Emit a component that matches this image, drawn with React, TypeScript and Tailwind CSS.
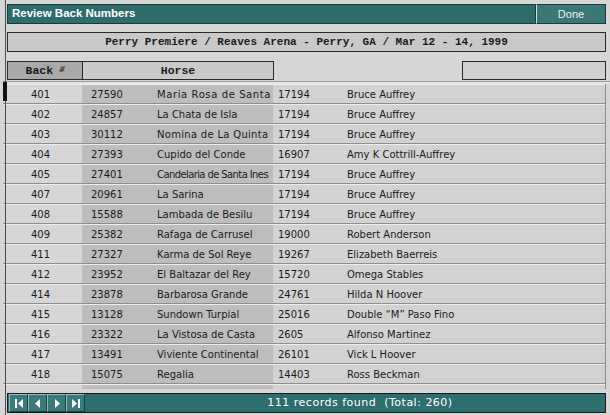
const rows = [
  ["401", "27590", "Maria Rosa de Santa", "17194", "Bruce Auffrey"],
  ["402", "24857", "La Chata de Isla", "17194", "Bruce Auffrey"],
  ["403", "30112", "Nomina de La Quinta", "17194", "Bruce Auffrey"],
  ["404", "27393", "Cupido del Conde", "16907", "Amy K Cottrill-Auffrey"],
  ["405", "27401", "Candelaria de Santa Ines", "17194", "Bruce Auffrey"],
  ["407", "20961", "La Sarina", "17194", "Bruce Auffrey"],
  ["408", "15588", "Lambada de Besilu", "17194", "Bruce Auffrey"],
  ["409", "25382", "Rafaga de Carrusel", "19000", "Robert Anderson"],
  ["411", "27327", "Karma de Sol Reye", "19267", "Elizabeth Baerreis"],
  ["412", "23952", "El Baltazar del Rey", "15720", "Omega Stables"],
  ["414", "23878", "Barbarosa Grande", "24761", "Hilda N Hoover"],
  ["415", "13128", "Sundown Turpial", "25016", "Double \u201cM\u201d Paso Fino"],
  ["416", "23322", "La Vistosa de Casta", "2605", "Alfonso Martinez"],
  ["417", "13491", "Viviente Continental", "26101", "Vick L Hoover"],
  ["418", "15075", "Regalia", "14403", "Ross Beckman"],
];

const rowFont = "font-['DejaVu_Sans',sans-serif] text-[10px] text-[#1a1a1a]";

// some names are spaced out / squeezed in the original list
const nameStyle = (name: string) => {
  if (name === "Maria Rosa de Santa") return "tracking-[0.6px]";
  if (name === "Candelaria de Santa Ines") return "tracking-[-0.6px]";
  if (name === "Nomina de La Quinta") return "tracking-[0.3px]";
  return "";
};

const NavButton = ({ kind }: { kind: "first" | "prev" | "next" | "last" }) => (
  <div className="w-[19px] h-[18px] flex items-center justify-center border border-[#9bbaba] border-r-[#1d3f3f] border-b-[#1d3f3f] bg-[#3a7a7a]">
    <svg width="10" height="11" viewBox="0 0 10 11" fill="#ffffff">
      {kind === "first" && (
        <>
          <rect x="1" y="1" width="2" height="9" />
          <path d="M9 1 L4 5.5 L9 10 Z" />
        </>
      )}
      {kind === "prev" && <path d="M7 1 L2 5.5 L7 10 Z" />}
      {kind === "next" && <path d="M3 1 L8 5.5 L3 10 Z" />}
      {kind === "last" && (
        <>
          <path d="M1 1 L6 5.5 L1 10 Z" />
          <rect x="7" y="1" width="2" height="9" />
        </>
      )}
    </svg>
  </div>
);

export default function App() {
  return (
    <div className="w-[610px] h-[415px] bg-[#d6d6d6] overflow-hidden relative border-l-[3px] border-[#d6d6d6]">
      <div className="absolute left-[2px] top-0 w-px h-[415px] bg-[#4a4a4a]" />
      <div className="absolute left-0 top-[82px] w-[4px] h-[19px] bg-[#111]" />

      {/* Title bar */}
      <div className="flex pt-[4px] pl-[4px] pr-[4px]">
        <div className="w-[529px] h-[20px] bg-[#2e6b6b] border border-[#1c3c3c] flex items-center pl-[4px]">
          <span className="font-['Liberation_Sans',sans-serif] font-bold text-[11.5px] text-white">
            Review Back Numbers
          </span>
        </div>
        <div className="w-[70px] h-[20px] bg-[#3b7777] border border-[#1c3c3c] border-l-[#cfdede] flex items-center justify-center">
          <span className="font-['Liberation_Sans',sans-serif] text-[11px] text-[#f0f0f0]">Done</span>
        </div>
      </div>

      {/* Event title */}
      <div className="mt-[8px] ml-[4px] w-[599px] h-[20px] bg-[#c9c9c9] border border-[#2a2a2a] flex items-center justify-center">
        <span className="font-['Liberation_Mono',monospace] font-bold text-[11px] text-[#1a1a1a]">
          Perry Premiere / Reaves Arena - Perry, GA / Mar 12 - 14, 1999
        </span>
      </div>

      {/* Column headers */}
      <div className="mt-[9px] ml-[4px] flex h-[19px]">
        <div className="w-[76px] bg-[#a9a9a9] border border-[#2a2a2a] flex items-center justify-center gap-[6px]">
          <span className="font-['Liberation_Mono',monospace] font-bold text-[11.5px] text-[#1a1a1a]">Back</span>
          <span className="font-['Liberation_Mono',monospace] font-bold text-[9px] text-[#1a1a1a] -skew-x-12">#</span>
        </div>
        <div className="w-[191px] bg-[#cacaca] border border-l-0 border-[#2a2a2a] flex items-center justify-center">
          <span className="font-['Liberation_Mono',monospace] font-bold text-[11.5px] text-[#1a1a1a]">Horse</span>
        </div>
        <div className="w-[188px]" />
        <div className="w-[144px] bg-[#d0d0d0] border border-[#2a2a2a]" />
      </div>

      <div className="mt-[1px] h-[3px] border-t border-[#9a9a9a] bg-[#e4e4e4]" />

      {/* Rows */}
      <div className="flex flex-col w-[603px] border-r border-[#8a8a8a]">
        {rows.map((r) => (
          <div
            key={r[0]}
            className={`flex h-[20px] items-center border-t border-[#ededed] border-b border-b-[#8e8e8e] bg-[#d3d3d3] ${rowFont}`}
          >
            <div className="w-[79px] h-full flex items-center pl-[28px] bg-[#d6d6d6]">{r[0]}</div>
            <div className="w-[191px] h-full flex items-center bg-[#bdbdbd]">
              <span className="pl-[9px] w-[75px] shrink-0">{r[1]}</span>
              <span className={`whitespace-nowrap ${nameStyle(r[2])}`}>{r[2]}</span>
            </div>
            <div className="flex-1 h-full flex items-center bg-[#d2d2d2]">
              <span className="pl-[5px] w-[74px] shrink-0">{r[3]}</span>
              <span className="whitespace-nowrap">{r[4]}</span>
            </div>
          </div>
        ))}
        <div className="flex h-[5px] border-t border-[#ededed]">
          <div className="w-[79px] bg-[#d6d6d6]" />
          <div className="w-[191px] bg-[#bdbdbd]" />
          <div className="flex-1 bg-[#d2d2d2]" />
        </div>
      </div>

      {/* Footer */}
      <div className="mt-[4px] ml-[4px] w-[599px] h-[20px] bg-[#2f6e6e] border border-[#1a1a1a] flex items-center pl-[1px]">
        <div className="flex">
          <NavButton kind="first" />
          <NavButton kind="prev" />
          <NavButton kind="next" />
          <NavButton kind="last" />
        </div>
        <div className="flex-1 flex justify-center pl-[30px]">
          <span className="font-['DejaVu_Sans',sans-serif] text-[11px] tracking-[0.5px] text-white whitespace-pre">
            111 records found  (Total: 260)
          </span>
        </div>
      </div>
    </div>
  );
}
